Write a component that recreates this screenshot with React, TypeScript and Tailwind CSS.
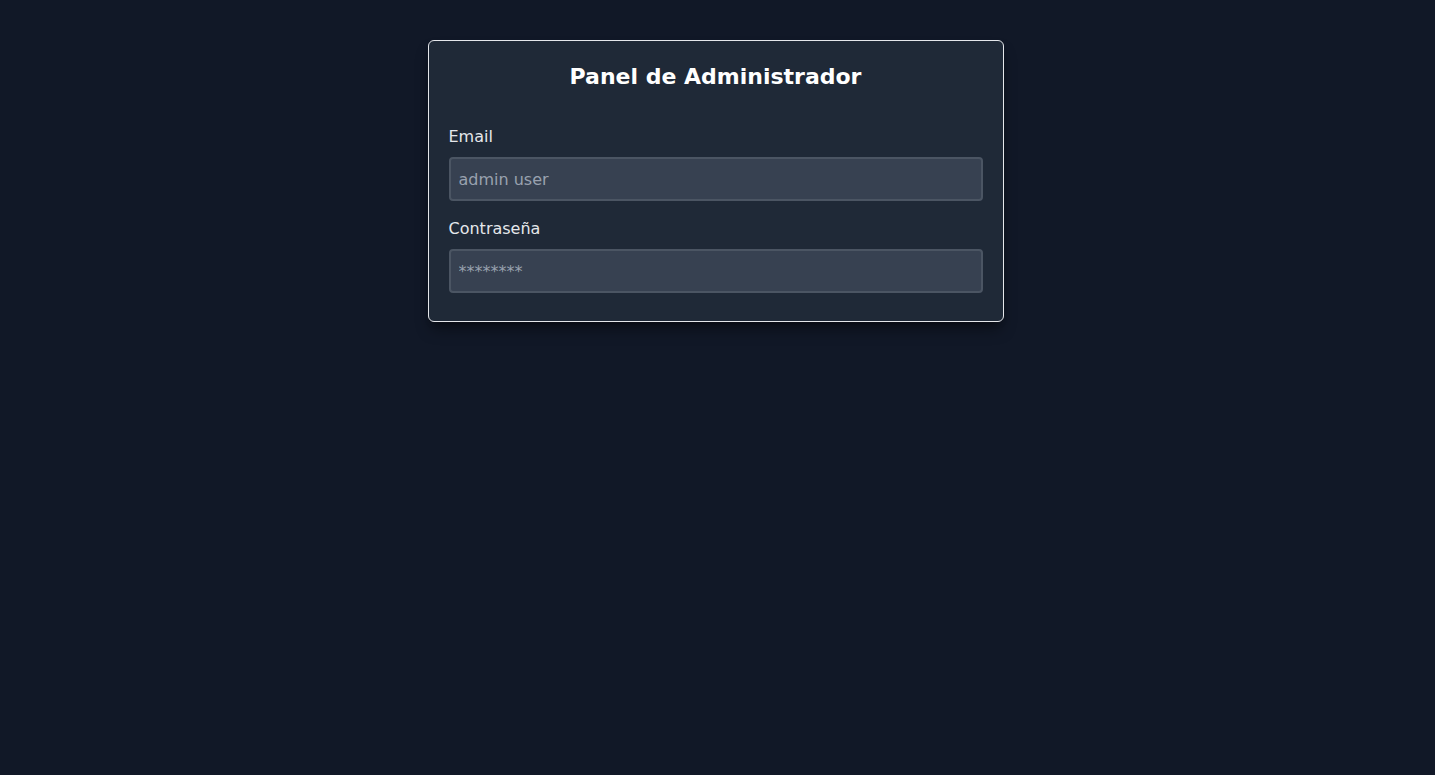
export default function App() {
  return (
    <div
      className="min-h-screen bg-[#111827] pt-10 pr-1"
      style={{ fontFamily: "'DejaVu Sans', 'Noto Sans', sans-serif" }}
    >
      <div className="mx-auto w-[576px] rounded-md border border-gray-200 bg-[#1f2937] p-5 shadow-lg shadow-black/40">
        <h1 className="mb-8 text-center text-[22px] leading-8 font-bold text-white">
          Panel de Administrador
        </h1>
        <form className="mb-2" onSubmit={(e) => e.preventDefault()}>
          <div className="mb-4">
            <label className="mb-2 block text-base leading-6 text-gray-200">
              Email
            </label>
            <input
              type="text"
              placeholder="admin user"
              className="block h-[44px] w-full rounded border-2 border-[#4b5563] bg-[#374151] px-2 text-base text-white placeholder:text-gray-400 outline-none"
            />
          </div>
          <div>
            <label className="mb-2 block text-base leading-6 text-gray-200">
              Contraseña
            </label>
            <input
              type="password"
              placeholder="********"
              className="block h-[44px] w-full rounded border-2 border-[#4b5563] bg-[#374151] px-2 text-base text-white placeholder:text-gray-400 outline-none"
            />
          </div>
        </form>
      </div>
    </div>
  );
}
